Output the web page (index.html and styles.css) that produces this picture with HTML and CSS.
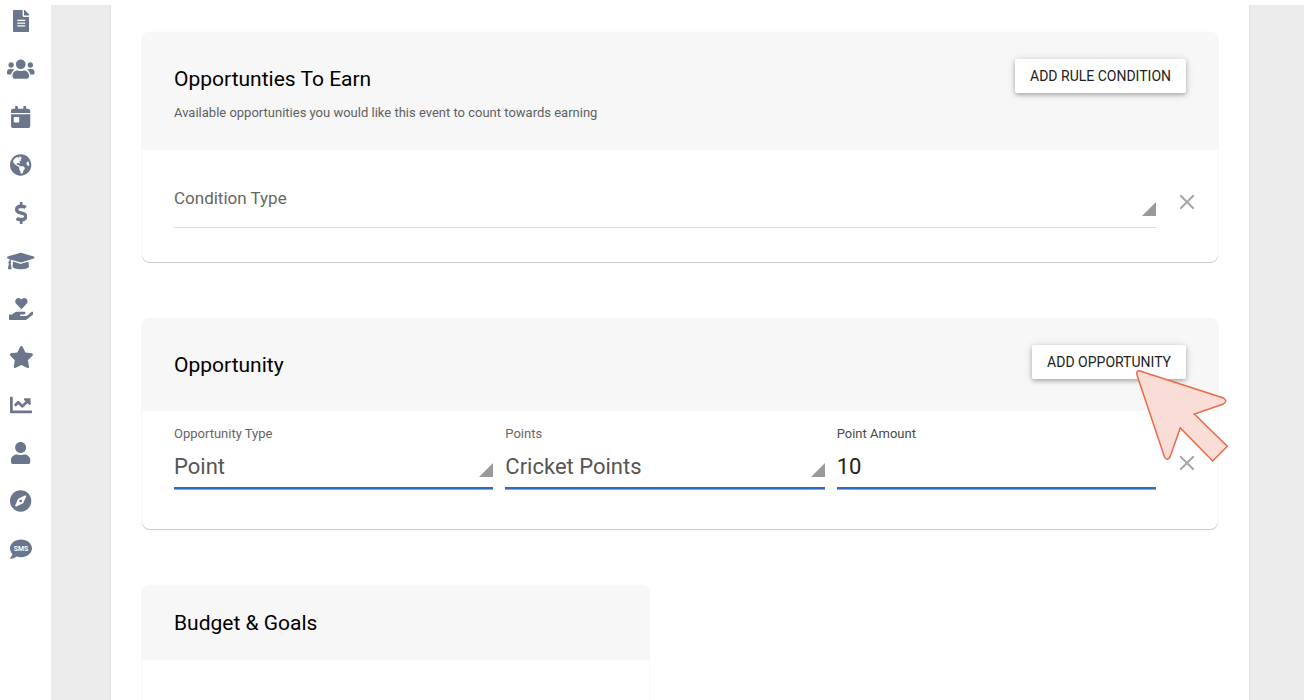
FILE: index.html
```html
<!DOCTYPE html>
<html lang="en">
    <head>
        <meta charset="UTF-8"/>
        <meta name="viewport" content="width=device-width, initial-scale=1">
        <title>Event Rule</title>
        <link rel="stylesheet" href="styles.css">
    </head>
    <body>
        <div class="app">
            <nav class="sidebar">
                <a href="#" aria-label="Documents"><svg viewBox="0 0 384 512"><path d="M224 136V0H24C10.7 0 0 10.7 0 24v464c0 13.3 10.7 24 24 24h336c13.3 0 24-10.7 24-24V160H248c-13.2 0-24-10.8-24-24zm64 236c0 6.6-5.4 12-12 12H108c-6.6 0-12-5.4-12-12v-8c0-6.6 5.4-12 12-12h168c6.6 0 12 5.4 12 12v8zm0-64c0 6.6-5.4 12-12 12H108c-6.6 0-12-5.4-12-12v-8c0-6.6 5.4-12 12-12h168c6.6 0 12 5.4 12 12v8zm0-72v8c0 6.6-5.4 12-12 12H108c-6.6 0-12-5.4-12-12v-8c0-6.6 5.4-12 12-12h168c6.6 0 12 5.4 12 12zm96-114.1v6.1H256V0h6.1c6.4 0 12.5 2.5 17 7l97.9 98c4.5 4.5 7 10.6 7 16.9z"/></svg></a>
                <a href="#" aria-label="Groups"><svg viewBox="0 0 640 512"><path d="M96 224c35.3 0 64-28.7 64-64s-28.7-64-64-64-64 28.7-64 64 28.7 64 64 64zm448 0c35.3 0 64-28.7 64-64s-28.7-64-64-64-64 28.7-64 64 28.7 64 64 64zm32 32h-64c-17.6 0-33.5 7.1-45.1 18.6 40.3 22.1 68.9 62 75.1 109.4h66c17.7 0 32-14.3 32-32v-32c0-35.3-28.7-64-64-64zm-256 0c61.9 0 112-50.1 112-112S381.9 32 320 32 208 82.1 208 144s50.1 112 112 112zm76.8 32h-8.3c-20.8 10-43.9 16-68.5 16s-47.6-6-68.5-16h-8.3C179.6 288 128 339.6 128 403.2V432c0 26.5 21.5 48 48 48h288c26.5 0 48-21.5 48-48v-28.8c0-63.6-51.6-115.2-115.2-115.2zm-223.7-13.4C161.5 263.1 145.6 256 128 256H64c-35.3 0-64 28.7-64 64v32c0 17.7 14.3 32 32 32h65.9c6.3-47.4 34.9-87.3 75.2-109.4z"/></svg></a>
                <a href="#" aria-label="Events"><svg viewBox="0 0 448 512"><path d="M0 464c0 26.5 21.5 48 48 48h352c26.5 0 48-21.5 48-48V192H0v272zm64-192c0-8.8 7.2-16 16-16h96c8.8 0 16 7.2 16 16v96c0 8.8-7.2 16-16 16H80c-8.8 0-16-7.2-16-16v-96zM400 64h-48V16c0-8.8-7.2-16-16-16h-32c-8.8 0-16 7.2-16 16v48H160V16c0-8.8-7.2-16-16-16h-32c-8.8 0-16 7.2-16 16v48H48C21.5 64 0 85.5 0 112v48h448v-48c0-26.5-21.5-48-48-48z"/></svg></a>
                <a href="#" aria-label="World"><svg viewBox="0 0 496 512"><path d="M248 8C111.03 8 0 119.03 0 256s111.03 248 248 248 248-111.03 248-248S384.97 8 248 8zm82.29 357.6c-3.9 3.88-7.99 7.95-11.31 11.28-2.99 3-5.1 6.7-6.17 10.71-1.51 5.66-2.73 11.38-4.77 16.87l-17.39 46.85c-13.76 3-28 4.69-42.65 4.69v-27.38c1.69-12.62-7.64-36.26-22.63-51.25-6-6-9.37-14.14-9.37-22.63v-32.01c0-11.64-6.27-22.34-16.46-27.97-14.37-7.95-34.81-19.06-48.81-26.11-11.48-5.78-22.1-13.14-31.65-21.75l-.8-.72a114.792 114.792 0 0 1-18.06-20.74c-9.38-13.77-24.66-36.42-34.59-51.14 20.47-45.5 57.36-82.04 103.2-101.89l24.01 12.01C203.48 89.74 216 82.01 216 70.11v-11.3c7.99-1.29 16.12-2.11 24.39-2.42l28.3 28.3c6.25 6.25 6.25 16.38 0 22.63L264 112l-10.34 10.34c-3.12 3.12-3.12 8.19 0 11.31l4.69 4.69c3.12 3.12 3.12 8.19 0 11.31l-8 8a8.008 8.008 0 0 1-5.66 2.34h-8.99c-2.08 0-4.08.81-5.58 2.27l-9.92 9.65a8.008 8.008 0 0 0-1.58 9.31l15.59 31.19c2.66 5.32-1.21 11.58-7.15 11.58h-5.64c-1.93 0-3.79-.7-5.24-1.96l-9.28-8.06a16.017 16.017 0 0 0-15.55-3.1l-31.17 10.39a11.95 11.95 0 0 0-8.17 11.34c0 4.53 2.56 8.66 6.61 10.69l11.08 5.54c9.41 4.71 19.79 7.16 30.31 7.16s22.59 27.29 32 32h66.75c8.49 0 16.62 3.37 22.63 9.37l13.69 13.69a30.503 30.503 0 0 1 8.93 21.57 46.536 46.536 0 0 1-13.72 32.98zM417 274.25c-5.79-1.45-10.84-5-14.15-9.97l-17.98-26.97a23.97 23.97 0 0 1 0-26.62l19.59-29.38c2.32-3.47 5.5-6.29 9.24-8.15l12.98-6.49C440.2 193.59 448 223.87 448 256c0 8.67-.74 17.16-1.82 25.54L417 274.25z"/></svg></a>
                <a href="#" aria-label="Money"><svg viewBox="0 0 288 512"><path d="M209.2 233.4l-108-31.6C88.7 198.2 80 186.5 80 173.5c0-16.3 13.2-29.5 29.5-29.5h66.3c12.2 0 24.2 3.7 34.2 10.5 6.1 4.1 14.3 3.1 19.5-2l34.8-34c7.1-6.9 6.1-18.4-1.8-24.5C238 74.8 207.4 64.1 176 64V16c0-8.8-7.2-16-16-16h-32c-8.8 0-16 7.2-16 16v48h-2.5C45.8 64-5.4 118.7.5 183.6c4.2 46.1 39.4 83.6 83.8 96.6l102.5 30c12.5 3.7 21.2 15.3 21.2 28.3 0 16.3-13.2 29.5-29.5 29.5h-66.3C100 368 88 364.3 78 357.5c-6.1-4.1-14.3-3.1-19.5 2l-34.8 34c-7.1 6.9-6.1 18.4 1.8 24.5 24.5 19.2 55.1 29.9 86.5 30v48c0 8.8 7.2 16 16 16h32c8.8 0 16-7.2 16-16v-48.2c46.6-.9 90.3-28.6 105.7-72.7 21.5-61.6-14.6-124.8-72.5-141.7z"/></svg></a>
                <a href="#" aria-label="Learning"><svg viewBox="0 0 640 512"><path d="M622.34 153.2L343.4 67.5c-15.2-4.67-31.6-4.67-46.79 0L17.66 153.2c-23.54 7.23-23.54 38.36 0 45.59l48.63 14.94c-10.67 13.19-17.23 29.28-17.88 46.9C38.78 266.15 32 276.11 32 288c0 10.78 5.68 19.85 13.86 25.65L20.33 428.53C18.11 438.52 25.71 448 35.94 448h56.11c10.24 0 17.84-9.48 15.62-19.47L82.14 313.65C90.32 307.85 96 298.78 96 288c0-11.57-6.47-21.25-15.66-26.87.76-15.02 8.44-28.3 20.69-36.72L296.6 284.5c9.06 2.78 26.44 6.25 46.79 0l278.95-85.7c23.55-7.24 23.55-38.36 0-45.6zM352.79 315.09c-28.53 8.76-52.84 3.92-65.59 0l-145.02-44.55L128 384c0 35.35 85.96 64 192 64s192-28.65 192-64l-14.18-113.47-145.03 44.56z"/></svg></a>
                <a href="#" aria-label="Giving"><svg viewBox="0 0 576 512"><path d="M275.3 250.5c7 7.4 18.4 7.4 25.5 0l108.9-114.2c31.6-33.2 29.8-88.2-5.6-118.8-30.8-26.7-76.7-21.9-104.9 7.7L288 36.9l-11.1-11.6C248.7-4.4 202.8-9.2 172 17.5c-35.3 30.6-37.2 85.6-5.6 118.8l108.9 114.2zm290 77.6c-11.8-10.7-30.2-10-42.6 0L430.3 402c-11.3 9.1-25.4 14-40 14H272c-8.8 0-16-7.2-16-16s7.2-16 16-16h78.3c15.9 0 30.7-10.9 33.3-26.6 3.3-20-12.1-37.4-31.6-37.4H192c-27 0-53.1 9.3-74.1 26.3L71.4 384H16c-8.8 0-16 7.2-16 16v96c0 8.8 7.2 16 16 16h356.8c14.5 0 28.6-4.9 40-14L564 377c15.2-12.1 16.4-35.3 1.3-48.9z"/></svg></a>
                <a href="#" aria-label="Favorites"><svg viewBox="0 0 576 512"><path d="M259.3 17.8L194 150.2 47.9 171.5c-26.2 3.8-36.7 36.1-17.7 54.6l105.7 103-25 145.5c-4.5 26.3 23.2 46 46.4 33.7L288 439.6l130.7 68.7c23.2 12.2 50.9-7.4 46.4-33.7l-25-145.5 105.7-103c19-18.5 8.5-50.8-17.7-54.6L382 150.2 316.7 17.8c-11.7-23.6-45.6-23.9-57.4 0z"/></svg></a>
                <a href="#" aria-label="Reports"><svg viewBox="0 0 512 512"><path d="M496 384H64V80c0-8.84-7.16-16-16-16H16C7.16 64 0 71.16 0 80v336c0 17.67 14.33 32 32 32h464c8.84 0 16-7.16 16-16v-32c0-8.84-7.16-16-16-16zM464 96H345.94c-21.38 0-32.09 25.85-16.97 40.97l32.4 32.4L288 242.75l-73.37-73.37c-12.5-12.5-32.76-12.5-45.25 0l-68.69 68.69c-6.25 6.25-6.25 16.38 0 22.63l22.62 22.62c6.25 6.25 16.38 6.25 22.63 0L192 237.25l73.37 73.37c12.5 12.5 32.76 12.5 45.25 0l96-96 32.4 32.4c15.12 15.12 40.97 4.41 40.97-16.97V112c.01-8.84-7.15-16-15.99-16z"/></svg></a>
                <a href="#" aria-label="Profile"><svg viewBox="0 0 448 512"><path d="M224 256c70.7 0 128-57.3 128-128S294.7 0 224 0 96 57.3 96 128s57.3 128 128 128zm89.6 32h-16.7c-22.2 10.2-46.9 16-72.9 16s-50.6-5.8-72.9-16h-16.7C60.2 288 0 348.2 0 422.4V464c0 26.5 21.5 48 48 48h352c26.5 0 48-21.5 48-48v-41.6c0-74.2-60.2-134.4-134.4-134.4z"/></svg></a>
                <a href="#" aria-label="Explore"><svg viewBox="0 0 496 512"><path d="M225.38 233.37c-12.5 12.5-12.5 32.76 0 45.25 12.49 12.5 32.76 12.5 45.25 0 12.5-12.5 12.5-32.76 0-45.25-12.5-12.49-32.76-12.49-45.25 0zM248 8C111.03 8 0 119.03 0 256s111.03 248 248 248 248-111.03 248-248S384.97 8 248 8zm126.14 148.05L308.17 300.4a31.938 31.938 0 0 1-15.77 15.77l-144.34 65.97c-16.65 7.61-33.81-9.55-26.2-26.2l65.98-144.35a31.938 31.938 0 0 1 15.77-15.77l144.34-65.97c16.65-7.6 33.8 9.55 26.19 26.2z"/></svg></a>
                <a href="#" aria-label="Text messages"><svg viewBox="0 0 512 512"><path d="M256 32C114.6 32 0 125.1 0 240c0 49.6 21.4 95 57 130.7C44.5 421.1 2.7 466 2.2 466.5c-2.2 2.3-2.8 5.7-1.5 8.7 1.3 3 4.1 4.8 7.3 4.8 66.3 0 116-31.8 140.6-51.4 32.7 12.3 69 19.4 107.4 19.4 141.4 0 256-93.1 256-208S397.4 32 256 32z"/><text class="sms" x="256" y="300" text-anchor="middle">SMS</text></svg></a>
            </nav>
            <div class="backdrop">
                <main class="page">
                    <section class="card">
                        <header class="card-header with-hint">
                            <div>
                                <h2>Opportunties To Earn</h2>
                                <p>Available opportunities you would like this event to count towards earning</p>
                            </div>
                            <div class="action">
                                <button type="button" class="raised">ADD RULE CONDITION</button>
                            </div>
                        </header>
                        <div class="row row-empty">
                            <div class="field">
                                <select class="placeholder" aria-label="Condition Type">
                                    <option>Condition Type</option>
                                </select>
                            </div>
                            <button type="button" class="remove" aria-label="Remove condition"><svg viewBox="0 0 14 14"><path d="M0 0l14 14M14 0L0 14"/></svg></button>
                        </div>
                    </section>

                    <section class="card">
                        <header class="card-header">
                            <h2>Opportunity</h2>
                            <div class="action">
                                <button type="button" class="raised">ADD OPPORTUNITY</button>
                                <svg class="pointer" viewBox="0 0 94 94" aria-hidden="true"><path d="M5 2L88.500 29Q93 32 88.500 35L59.300 45L92.300 77.300L77.700 92L45.300 59L35 88Q32 92.500 29.500 88L2 6Q1 1 5 2Z"/></svg>
                            </div>
                        </header>
                        <div class="row">
                            <div class="field">
                                <label for="type">Opportunity Type</label>
                                <select id="type">
                                    <option>Point</option>
                                </select>
                            </div>
                            <div class="field">
                                <label for="points">Points</label>
                                <select id="points">
                                    <option>Cricket Points</option>
                                </select>
                            </div>
                            <div class="field amount">
                                <label for="amount">Point Amount</label>
                                <input id="amount" type="text" value="10"/>
                            </div>
                            <button type="button" class="remove" aria-label="Remove opportunity"><svg viewBox="0 0 14 14"><path d="M0 0l14 14M14 0L0 14"/></svg></button>
                        </div>
                    </section>

                    <div class="columns">
                        <section class="card">
                            <header class="card-header compact">
                                <h2>Budget &amp; Goals</h2>
                            </header>
                            <div class="blank"></div>
                        </section>
                    </div>
                </main>
            </div>
        </div>
    </body>
</html>
```
FILE: styles.css
```css
*
{
    box-sizing:border-box;
}
body
{
    margin:0;
    padding-top:5px;
    height:100vh;
    overflow:hidden;
    background:#fff;
    color:#000;
    font-family:Roboto, "Liberation Sans", sans-serif;
}
button, select, input
{
    font-family:inherit;
}
h2, p
{
    margin:0;
}

.app
{
    display:flex;
    height:100%;
}

.sidebar
{
    display:flex;
    flex-direction:column;
    gap:26px;
    flex:none;
    width:51px;
    padding:5px 13px 0 4px;
}
.sidebar a
{
    display:flex;
    justify-content:center;
    height:22px;
}
.sidebar svg
{
    flex:none;
    height:22px;
    fill:#6b768c;
}
.sidebar .sms
{
    fill:#fff;
    font-size:160px;
    font-weight:700;
}

.backdrop
{
    flex:1;
    min-width:0;
    padding:0 54px 0 59px;
    overflow:hidden;
    background:#ebebeb;
}
.page
{
    display:flex;
    flex-direction:column;
    gap:56px;
    min-height:100%;
    padding:27px 31px;
    border:1px solid #e2e2e2;
    border-width:0 1px;
    background:#fff;
}

.card
{
    border-radius:8px;
    box-shadow:0 1px 1px rgba(0,0,0,.2), 0 0 1px rgba(0,0,0,.12);
    background:#fff;
}
.card-header
{
    display:flex;
    justify-content:space-between;
    align-items:flex-start;
    padding:33px 32px 31px;
    border-radius:8px 8px 0 0;
    background:#f7f7f7;
}
.card-header.with-hint
{
    padding-bottom:27px;
}
.card-header.compact
{
    padding:24px 32px 22px;
}
.card-header h2
{
    font-size:21px;
    font-weight:400;
    line-height:29px;
}
.card-header p
{
    margin-top:9px;
    color:#616161;
    font-size:13px;
    line-height:20px;
}

.action
{
    position:relative;
    height:29px;
    margin-top:-6px;
}
.raised
{
    display:block;
    height:34px;
    padding:0 15px;
    border:none;
    border-radius:2px;
    box-shadow:0 2px 4px rgba(0,0,0,.24), 0 1px 8px rgba(0,0,0,.14);
    background:#fff;
    color:#212121;
    font-size:14px;
    cursor:pointer;
}
.pointer
{
    position:absolute;
    top:24px;
    right:-43px;
    z-index:1;
    width:94px;
    height:94px;
    fill:#f9ddd6;
    stroke:#ec6a48;
    stroke-width:1.5;
    pointer-events:none;
}

.row
{
    display:flex;
    gap:12px;
    padding:13px 0 40px 32px;
}
.row-empty
{
    padding:21px 0 34px 32px;
}
.field
{
    display:flex;
    flex:1;
    flex-direction:column;
    min-width:0;
}
.field label
{
    color:#666;
    font-size:13px;
    line-height:20px;
}
.field.amount label
{
    color:#4a4a4a;
}
.field select, .field input
{
    width:100%;
    height:45px;
    margin:0;
    padding:1px 0 0;
    border:none;
    border-bottom:2px solid #2f6cc4;
    border-radius:0;
    outline:none;
    box-shadow:0 1px 0 #7ea9e2;
    background:none;
    color:#555;
    font-size:22px;
}
.field select
{
    appearance:none;
    background:url("data:image/svg+xml,%3Csvg xmlns='http://www.w3.org/2000/svg' viewBox='0 0 14 14'%3E%3Cpath d='M14 0v14H0z' fill='%23999'/%3E%3C/svg%3E") no-repeat right bottom 10px / 14px 14px;
}
.field input
{
    color:#212121;
}
.field select.placeholder
{
    height:57px;
    padding:0 0 2px;
    border-bottom:1px solid #ddd;
    box-shadow:none;
    background-position:right bottom 11px;
    color:#666;
    font-size:17px;
}
.remove
{
    display:flex;
    justify-content:center;
    align-items:center;
    flex:none;
    align-self:flex-end;
    width:38px;
    height:52px;
    margin-right:12px;
    padding:0;
    border:none;
    background:none;
    cursor:pointer;
}
.remove svg
{
    width:14px;
    height:14px;
    fill:none;
    stroke:#a6a6a6;
    stroke-width:2;
}

.columns
{
    display:grid;
    grid-template-columns:1fr 1fr;
    gap:62px;
}
.blank
{
    height:160px;
}
```
